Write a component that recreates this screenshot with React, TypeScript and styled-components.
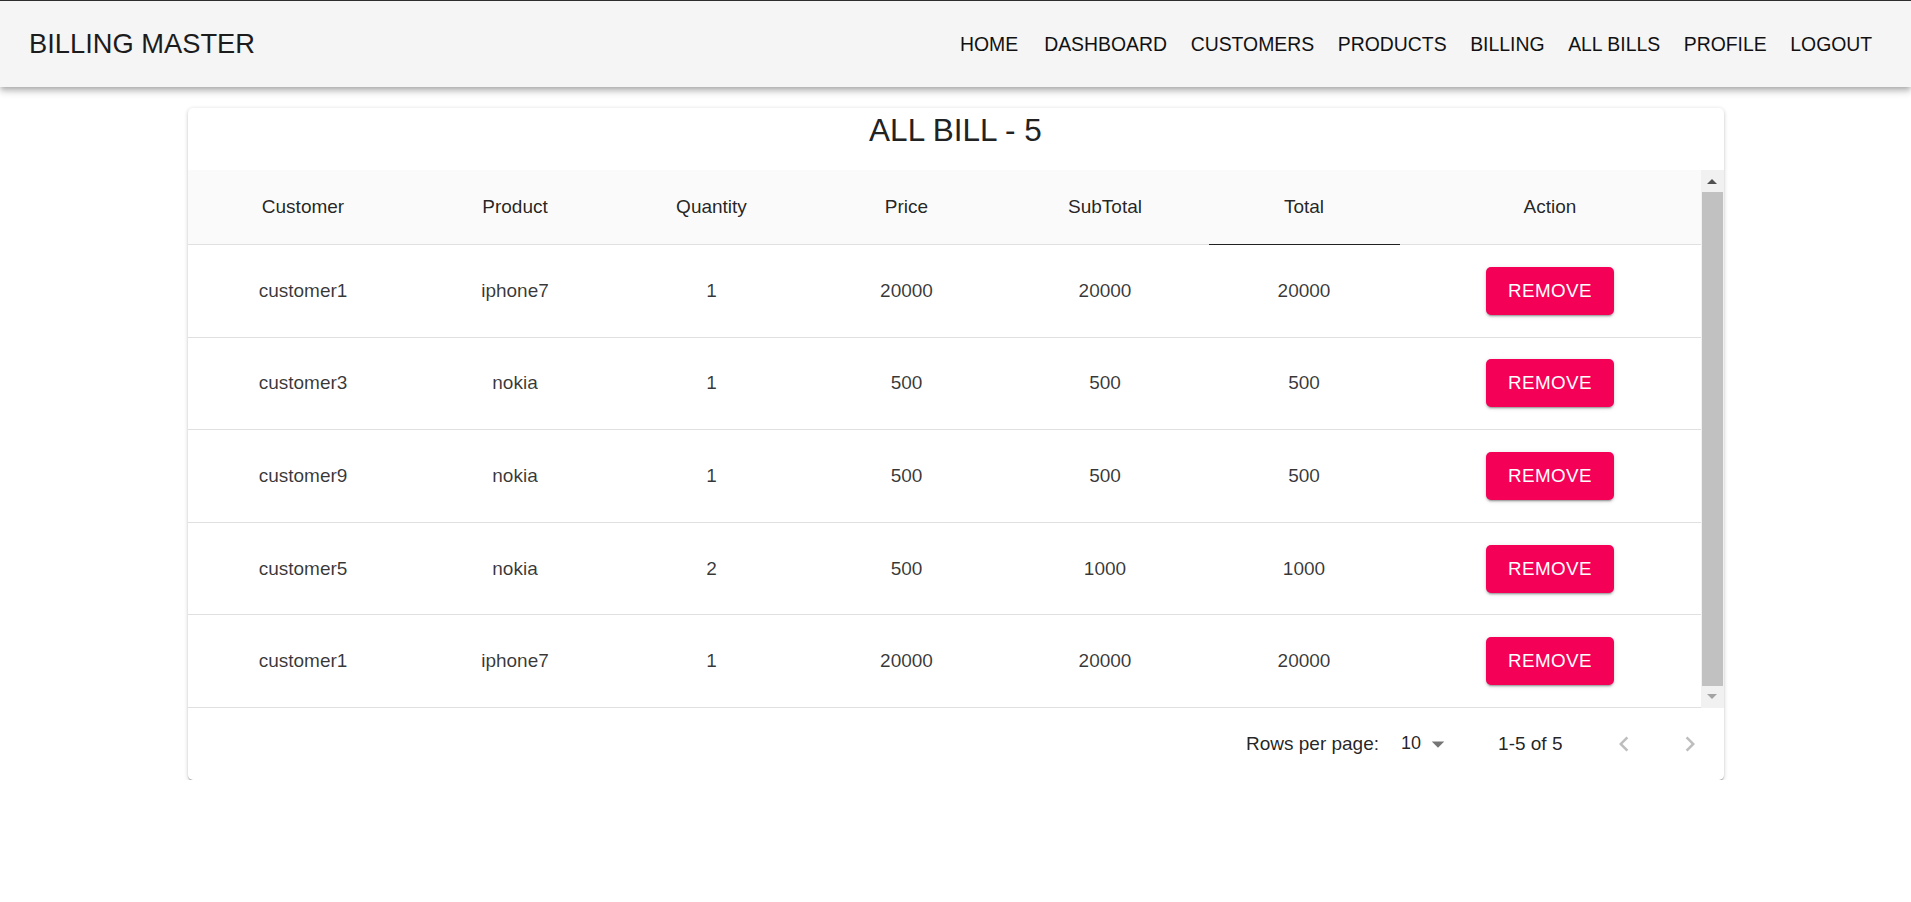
import React from 'react';
import styled, { createGlobalStyle } from 'styled-components';

const GlobalStyle = createGlobalStyle`
  html, body { margin: 0; padding: 0; background: #ffffff; }
  body {
    font-family: "Liberation Sans", Arial, Helvetica, sans-serif;
    color: rgba(0, 0, 0, 0.87);
  }
  * { box-sizing: border-box; }
`;

const AppBar = styled.header`
  position: relative;
  z-index: 1;
  height: 87px;
  border-top: 1px solid #2e2e2e;
  background: #f5f5f5;
  box-shadow: 0 2px 5px -1px rgba(0, 0, 0, 0.2), 0 5px 6px 0 rgba(0, 0, 0, 0.14),
    0 1px 12px 0 rgba(0, 0, 0, 0.12);
  display: flex;
  align-items: center;
  justify-content: space-between;
  padding: 0 27px 0 29px;
`;

const Brand = styled.div`
  font-size: 27.3px;
  color: #1c1c1c;
  white-space: nowrap;
`;

const Nav = styled.nav`
  display: flex;
  align-items: center;
`;

const NavLink = styled.a<{ $first?: boolean }>`
  padding: 0 11.8px;
  margin-right: ${(p) => (p.$first ? '2.4px' : '0')};
  font-size: 19.4px;
  color: #111111;
  text-decoration: none;
  white-space: nowrap;
`;

const Main = styled.main`
  padding-top: 21px;
`;

const Card = styled.section`
  width: 1536px;
  margin: 0 auto;
  background: #ffffff;
  border-radius: 5px;
  overflow: hidden;
  box-shadow: 0 1px 4px 0 rgba(0, 0, 0, 0.2), 0 1px 1px 0 rgba(0, 0, 0, 0.18),
    0 2px 1px -1px rgba(0, 0, 0, 0.16);
`;

const Title = styled.h2`
  margin: 0;
  height: 62px;
  padding-top: 3px;
  text-align: center;
  font-size: 31.5px;
  line-height: 38px;
  font-weight: 400;
  color: #222222;
`;

const TableArea = styled.div`
  display: flex;
`;

const Grid = styled.div`
  flex: 1;
  display: flex;
  flex-direction: column;
`;

const Row = styled.div<{ $head?: boolean }>`
  display: grid;
  grid-template-columns: 231px 193px 200px 190px 207px 191px 1fr;
  height: ${(p) => (p.$head ? '75px' : '92.6px')};
  background: ${(p) => (p.$head ? '#fafafa' : '#ffffff')};
`;

const Cell = styled.div<{ $active?: boolean; $head?: boolean }>`
  display: flex;
  align-items: center;
  justify-content: center;
  font-size: 19px;
  color: ${(p) => (p.$head ? 'rgba(0, 0, 0, 0.87)' : 'rgba(0, 0, 0, 0.78)')};
  border-bottom: 1px solid ${(p) => (p.$active ? 'rgba(0, 0, 0, 0.87)' : '#e0e0e0')};
`;

const RemoveButton = styled.button`
  height: 48px;
  padding: 0 22px;
  border: none;
  border-radius: 5px;
  background: #f50057;
  color: #ffffff;
  font-family: "Liberation Sans", Arial, sans-serif;
  font-size: 18.8px;
  font-weight: 500;
  letter-spacing: 0.4px;
  text-transform: uppercase;
  cursor: pointer;
  box-shadow: 0 3px 1px -2px rgba(0, 0, 0, 0.2), 0 2px 2px 0 rgba(0, 0, 0, 0.14),
    0 1px 5px 0 rgba(0, 0, 0, 0.12);
`;

const Rail = styled.div`
  width: 23px;
  background: #f1f1f1;
  display: flex;
  flex-direction: column;
`;

const RailButton = styled.div<{ $down?: boolean }>`
  height: 22px;
  display: flex;
  align-items: center;
  justify-content: center;
  &::after {
    content: '';
    width: 0;
    height: 0;
    border-left: 5px solid transparent;
    border-right: 5px solid transparent;
    ${(p) =>
      p.$down
        ? 'border-top: 5px solid #a3a3a3;'
        : 'border-bottom: 5px solid #505050;'}
  }
`;

const Thumb = styled.div`
  flex: 1;
  margin: 0 1px;
  background: #c1c1c1;
`;

const Footer = styled.div`
  height: 72px;
  display: flex;
  align-items: center;
  justify-content: flex-end;
  padding-right: 14px;
`;

const FooterLabel = styled.span`
  font-size: 19px;
  color: rgba(0, 0, 0, 0.87);
  margin-right: 22px;
`;

const RowsSelect = styled.div`
  display: flex;
  align-items: center;
  gap: 2px;
  font-size: 18px;
  color: rgba(0, 0, 0, 0.87);
  margin-right: 45px;
  svg { display: block; }
`;

const Range = styled.span`
  font-size: 19px;
  color: rgba(0, 0, 0, 0.87);
  margin-right: 41px;
`;

const Pager = styled.div`
  display: flex;
  gap: 26px;
`;

const PageButton = styled.button`
  width: 40px;
  height: 40px;
  padding: 0;
  border: none;
  background: transparent;
  display: flex;
  align-items: center;
  justify-content: center;
  color: rgba(0, 0, 0, 0.26);
  svg { display: block; }
`;

const columns = ['Customer', 'Product', 'Quantity', 'Price', 'SubTotal', 'Total', 'Action'];

const bills = [
  { customer: 'customer1', product: 'iphone7', qty: 1, price: 20000, sub: 20000, total: 20000 },
  { customer: 'customer3', product: 'nokia', qty: 1, price: 500, sub: 500, total: 500 },
  { customer: 'customer9', product: 'nokia', qty: 1, price: 500, sub: 500, total: 500 },
  { customer: 'customer5', product: 'nokia', qty: 2, price: 500, sub: 1000, total: 1000 },
  { customer: 'customer1', product: 'iphone7', qty: 1, price: 20000, sub: 20000, total: 20000 },
];

const navItems = ['HOME', 'DASHBOARD', 'CUSTOMERS', 'PRODUCTS', 'BILLING', 'ALL BILLS', 'PROFILE', 'LOGOUT'];

const DropIcon = () => (
  <svg width="30" height="30" viewBox="0 0 24 24" fill="rgba(0,0,0,0.54)">
    <path d="M7 10l5 5 5-5z" />
  </svg>
);

const ChevronLeft = () => (
  <svg width="30" height="30" viewBox="0 0 24 24" fill="currentColor">
    <path d="M15.41 16.59L10.83 12l4.58-4.59L14 6l-6 6 6 6 1.41-1.41z" />
  </svg>
);

const ChevronRight = () => (
  <svg width="30" height="30" viewBox="0 0 24 24" fill="currentColor">
    <path d="M8.59 16.59L13.17 12 8.59 7.41 10 6l6 6-6 6-1.41-1.41z" />
  </svg>
);

export default function App() {
  return (
    <>
      <GlobalStyle />
      <AppBar>
        <Brand>BILLING MASTER</Brand>
        <Nav>
          {navItems.map((item, i) => (
            <NavLink key={item} href="#" $first={i === 0}>
              {item}
            </NavLink>
          ))}
        </Nav>
      </AppBar>
      <Main>
        <Card>
          <Title>ALL BILL - 5</Title>
          <TableArea>
            <Grid>
              <Row $head>
                {columns.map((c) => (
                  <Cell key={c} $head $active={c === 'Total'}>
                    {c}
                  </Cell>
                ))}
              </Row>
              {bills.map((b, i) => (
                <Row key={i}>
                  <Cell>{b.customer}</Cell>
                  <Cell>{b.product}</Cell>
                  <Cell>{b.qty}</Cell>
                  <Cell>{b.price}</Cell>
                  <Cell>{b.sub}</Cell>
                  <Cell>{b.total}</Cell>
                  <Cell>
                    <RemoveButton>Remove</RemoveButton>
                  </Cell>
                </Row>
              ))}
            </Grid>
            <Rail>
              <RailButton />
              <Thumb />
              <RailButton $down />
            </Rail>
          </TableArea>
          <Footer>
            <FooterLabel>Rows per page:</FooterLabel>
            <RowsSelect>
              <span>10</span>
              <DropIcon />
            </RowsSelect>
            <Range>1-5 of 5</Range>
            <Pager>
              <PageButton aria-label="previous page">
                <ChevronLeft />
              </PageButton>
              <PageButton aria-label="next page">
                <ChevronRight />
              </PageButton>
            </Pager>
          </Footer>
        </Card>
      </Main>
    </>
  );
}
